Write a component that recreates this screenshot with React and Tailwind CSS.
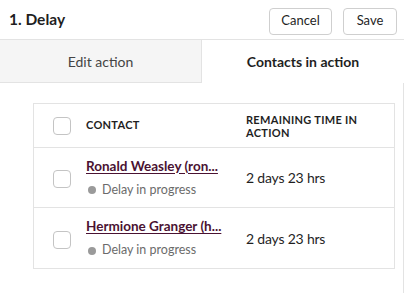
import React from "react";

const contacts = [
  { name: "Ronald Weasley (ron...", time: "2 days 23 hrs" },
  { name: "Hermione Granger (h...", time: "2 days 23 hrs" },
];

const Checkbox = () => (
  <span className="block w-[18px] h-[18px] rounded-[4px] border border-[#c4c4c4] bg-white shrink-0" />
);

export default function App() {
  return (
    <div
      className="w-[404px] h-[293px] bg-white text-[#1f1f1f] overflow-hidden flex flex-col"
      style={{ fontFamily: "Lato, 'Open Sans', sans-serif" }}
    >
      {/* header */}
      <div className="h-[40px] shrink-0 flex items-center justify-between pl-[9px] pr-[7px] border-b border-[#e3e3e3]">
        <h1 className="text-[15.5px] font-bold">1. Delay</h1>
        <div className="flex items-center gap-[11px] pt-[3px]">
          <button className="h-[27px] w-[63px] rounded-[4px] border border-[#cfcfcf] text-[13px]">
            Cancel
          </button>
          <button className="h-[27px] w-[54px] rounded-[4px] border border-[#cfcfcf] text-[13px]">
            Save
          </button>
        </div>
      </div>

      {/* tabs */}
      <div className="h-[43px] shrink-0 flex">
        <div className="w-[202px] flex items-center justify-center bg-[#f5f5f5] border-r border-b border-[#e3e3e3] text-[14px] text-[#444]">
          Edit action
        </div>
        <div className="flex-1 flex items-center justify-center text-[14px] font-bold">
          Contacts in action
        </div>
      </div>

      {/* contacts table */}
      <div className="flex-1 border-r border-[#e3e3e3] pt-[20px] pl-[33px] pr-[8px]">
        <div className="border border-[#e3e3e3]">
          <div className="h-[44px] flex items-center border-b border-[#e3e3e3]">
            <div className="w-[52px] pl-[19px]">
              <Checkbox />
            </div>
            <div className="w-[160px] text-[11px] font-bold tracking-[0.3px]">CONTACT</div>
            <div className="flex-1 text-[11px] font-bold leading-[13px] tracking-[0.3px]">
              REMAINING TIME IN
              <br />
              ACTION
            </div>
          </div>
          {contacts.map((c, i) => (
            <div
              key={c.name}
              className={`h-[60px] flex items-center ${
                i < contacts.length - 1 ? "border-b border-[#e3e3e3]" : ""
              }`}
            >
              <div className="w-[52px] pl-[19px] pt-[3px]">
                <Checkbox />
              </div>
              <div className="w-[160px] pr-[16px]">
                <div className="whitespace-nowrap text-[13.5px] font-bold text-[#4a1232] underline underline-offset-2">
                  {c.name}
                </div>
                <div className="mt-[5px] flex items-center gap-[6px] pl-[2px] text-[12.5px] text-[#6b6b6b]">
                  <span className="w-[8px] h-[8px] rounded-full bg-[#9a9a9a]" />
                  Delay in progress
                </div>
              </div>
              <div className="flex-1 text-[14px] tracking-[-0.2px]">{c.time}</div>
            </div>
          ))}
        </div>
      </div>
    </div>
  );
}
